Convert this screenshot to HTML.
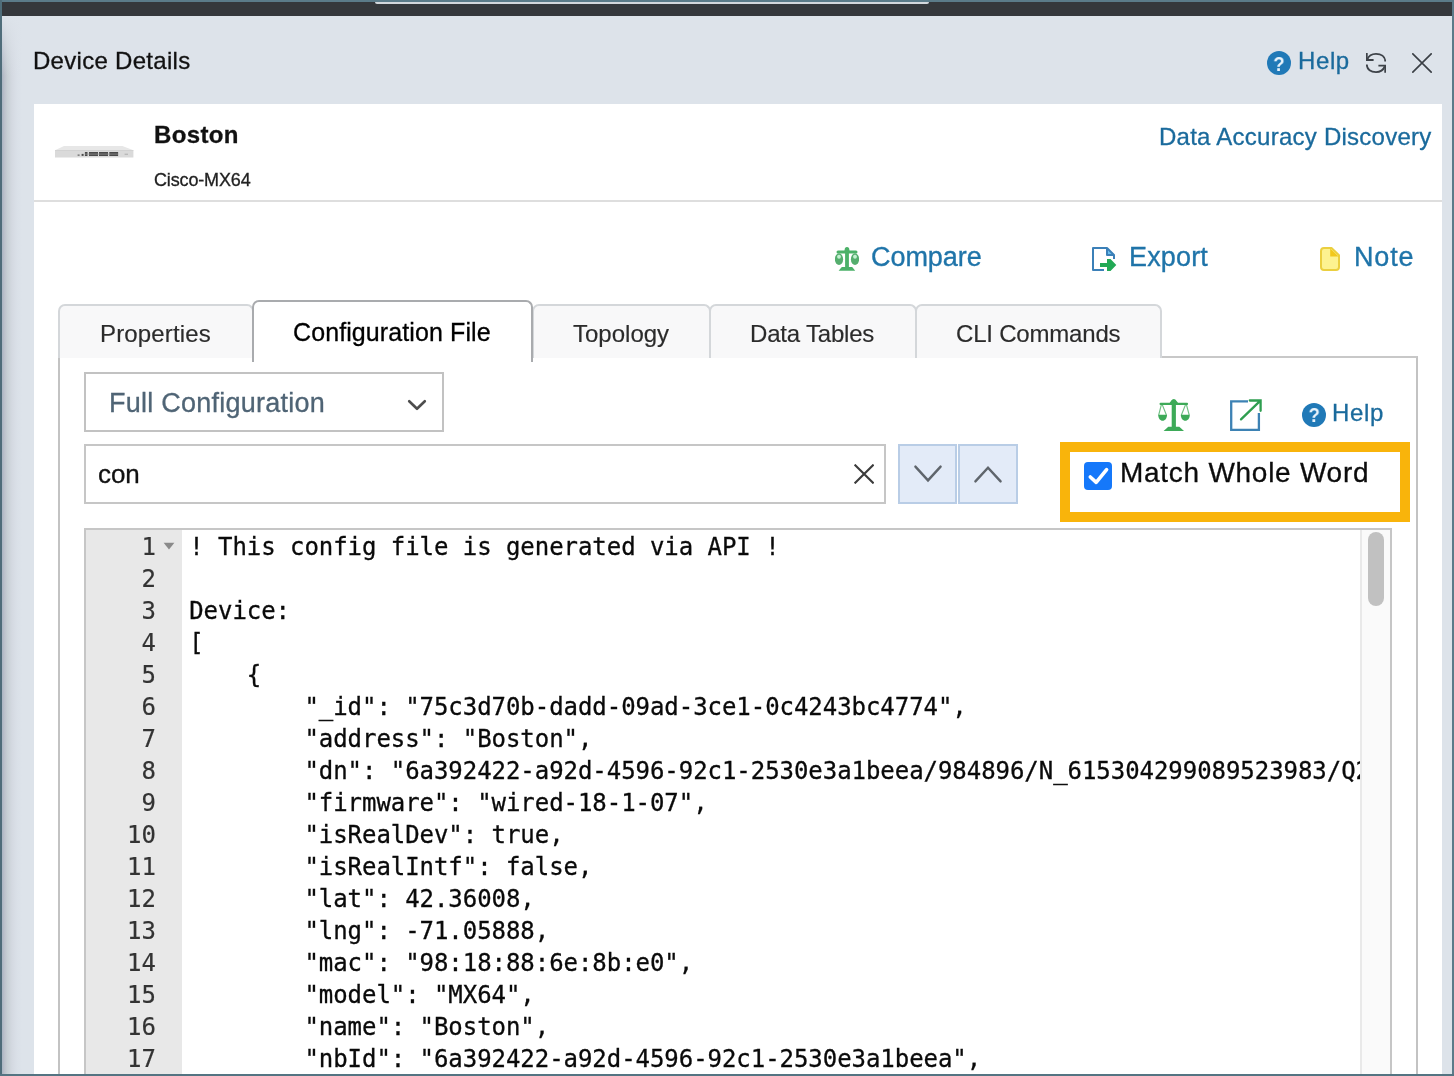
<!DOCTYPE html>
<html lang="en">
<head>
<meta charset="utf-8">
<title>Device Details</title>
<style>
:root{--sans:"Liberation Sans","DejaVu Sans",sans-serif;--mono:"DejaVu Sans Mono","Liberation Mono",monospace;}
*{box-sizing:border-box;margin:0;padding:0}
html,body{width:1454px;height:1076px;overflow:hidden}
body{position:relative;background:#dde3ea;font-family:var(--sans);color:#222}
.abs{position:absolute}
.t{will-change:transform;position:absolute;white-space:nowrap;line-height:1;-webkit-text-stroke:.3px}
.link{color:#1a6a9c;-webkit-text-stroke:.3px #1a6a9c}
.link2{color:#1f74a9;-webkit-text-stroke:.35px #1f74a9}
#topteal{left:0;top:0;width:1454px;height:2px;background:#5b7b89}
#topbar{left:2px;top:2px;width:1450px;height:14px;background:#35383c}
#topline{left:375px;top:2px;width:554px;height:1.7px;background:#d3d7dc;border-radius:0 0 4px 4px}
#leftteal{left:0;top:0;width:2px;height:1076px;background:#4f6d7a}
#leftshadow{left:2px;top:16px;width:20px;height:1060px;background:linear-gradient(90deg,#a9b5c2 0,#bcc1cb 12%,#c8d0d5 28%,#d4d9e1 50%,#dae0e8 75%,#dde3ea 100%)}
#leftfade{left:2px;top:16px;width:20px;height:60px;background:linear-gradient(180deg,#dde3ea 0,rgba(221,227,234,.6) 40%,rgba(221,227,234,0) 100%)}
#rightteal{left:1452px;top:0;width:2px;height:1076px;background:#5b7b89}
#bottomteal{left:0;top:1074px;width:1454px;height:2px;background:#547482}
#panel{left:34px;top:104px;width:1408px;height:970px;background:#fff}
#sep{left:34px;top:200px;width:1408px;height:2px;background:#dedede}

.tab{position:absolute;top:304px;height:54px;background:#f8f8f9;border:2px solid #d4d7da;border-bottom:none;border-radius:7px 7px 0 0}
.tab.act{top:300px;height:62px;background:#fff;border-color:#a9abae}
.tabt{font-size:24px;color:#2b2b2b;top:322.4px;-webkit-text-stroke:.15px}
#tabpanel{left:58px;top:356px;width:1360px;height:730px;border:2px solid #c3c3c3;border-top-color:#c8c8c8}
#tabcover{left:60px;top:356px;width:1101px;height:2px;background:#fff}
.box{position:absolute;background:#fff;border:2px solid #c2c2c2}
.btn{position:absolute;top:444px;height:60px;background:#e3ebf8;border:2px solid #b9cde6}
#orange{left:1060px;top:442px;width:350px;height:80px;border:10px solid #f9b40b;background:#fff}
#cb{left:1084px;top:462px;width:28px;height:28px;border-radius:4px;background:#1578fa}
#editor{left:84px;top:528px;width:1308px;height:560px;border:2px solid #c6c6c6;background:#fff;overflow:hidden}
#gutter{left:0;top:0;width:96px;height:560px;background:#e8e8e8}
.ln{position:absolute;left:0;width:69.9px;text-align:right;color:#333;-webkit-text-stroke:.2px}
#editor .ln,#editor .cl{font-family:var(--mono);font-size:24px;line-height:32px;height:32px;white-space:pre;letter-spacing:-0.05px}
.cl{position:absolute;left:103.2px;color:#0a0a0a;-webkit-text-stroke:.3px}
#code{will-change:transform;left:0;top:0;width:1274px;height:560px;overflow:hidden}
#lnwrap{will-change:transform;left:0;top:0;width:96px;height:560px}
#sbar{left:1274px;top:0;width:30px;height:560px;background:#fafafa;border-left:2px solid #e9e9e9}
#thumb{left:1282px;top:2px;width:15.8px;height:74px;border-radius:8px;background:#c1c1c1}
</style>
</head>
<body>
<div class="abs" id="topteal"></div>
<div class="abs" id="topbar"></div>
<div class="abs" id="topline"></div>
<div class="abs" id="leftshadow"></div>
<div class="abs" id="leftfade"></div>
<div class="abs" id="leftteal"></div>
<div class="abs" id="rightteal"></div>
<div class="abs" id="panel"></div>
<div class="abs" id="sep"></div>
<div class="t" id="title" style="left:32.8px;top:48.5px;font-size:24px;color:#111;letter-spacing:.29px">Device Details</div>
<div class="abs" id="hhelp" style="left:1267px;top:51px;width:24px;height:24px;border-radius:50%;background:#2079b7"></div>
<div class="t" style="left:1267px;top:52.6px;width:24px;text-align:center;font-size:21px;font-weight:bold;color:#e8f3fb;-webkit-text-stroke:0;transform:scaleX(.88)">?</div>
<div class="t link" id="helptxt" style="left:1298px;top:48.5px;font-size:24px;letter-spacing:.6px">Help</div>
<svg class="abs" style="left:1366px;top:53px" width="20" height="20" viewBox="0 0 20 20" fill="none" stroke="#3d4248" stroke-width="1.8">
<path d="M0.8,0 V7 H7.6"/><path d="M1.3,6.4 C2.6,3 5.6,0.9 10,0.9 C15,0.9 19.2,3.2 19.2,8.6"/>
<path d="M12.4,12.6 H19.2 V19.8"/><path d="M18.7,13.4 C17.4,16.9 14.4,19.1 10,19.1 C5,19.1 0.8,16.8 0.8,11.6"/>
</svg>
<svg class="abs" style="left:1412px;top:53px" width="20" height="20" viewBox="0 0 20 20" fill="none" stroke="#3a3f45" stroke-width="1.6">
<path d="M0.3,0.3 L19.7,19.7 M19.7,0.3 L0.3,19.7"/></svg>
<!--HEADER-->
<svg class="abs" style="left:54px;top:145px" width="81" height="14" viewBox="54 145 81 14">
<polygon points="64,146 122.4,146 133.4,150.2 55,150.2" fill="#e7e7e7"/>
<rect x="55" y="150.2" width="78.4" height="7.3" fill="#dadada"/>
<rect x="55" y="150" width="78.4" height="0.8" fill="#cfcfcf"/>
<g fill="#4a4a4a"><rect x="84.9" y="152" width="2.6" height="4"/><rect x="89" y="152" width="9" height="4"/><rect x="99" y="152" width="9" height="4"/><rect x="109.3" y="152" width="8.8" height="4"/>
<rect x="77.6" y="154.6" width="2" height="1"/><rect x="81.6" y="153.9" width="2" height="2"/></g>
<rect x="84.9" y="153.7" width="33.2" height="0.7" fill="#9a9a9a"/>
<rect x="124.6" y="153.6" width="3.4" height="1.4" fill="#b9b9b9"/>
</svg>
<div class="t" id="boston" style="left:154.1px;top:122.8px;font-size:24px;font-weight:bold;color:#111;letter-spacing:.35px">Boston</div>
<div class="t" id="model" style="left:154px;top:170.7px;font-size:18px;color:#222;letter-spacing:-.15px">Cisco-MX64</div>
<div class="t link" id="dad" style="right:22px;top:125px;font-size:24px;letter-spacing:.25px">Data Accuracy Discovery</div>
<!--DEVICE-->
<svg class="abs" id="ic_cmp" style="left:835px;top:247px" width="24" height="24" viewBox="0 0 24 24" fill="#4bb168">
<rect x="10.1" y="1" width="3.8" height="21"/>
<path d="M9.7,2.6 Q9.7,0 12,0 Q14.3,0 14.3,2.6 L14.6,3.6 H21 a1.5,1.5 0 0 1 0,3 H3 a1.5,1.5 0 0 1 0,-3 H9.4 Z"/>
<ellipse cx="4" cy="12.2" rx="4.1" ry="5.9" fill="#55ae6e"/>
<ellipse cx="20" cy="12.2" rx="4.1" ry="5.9" fill="#55ae6e"/>
<ellipse cx="4" cy="9.8" rx="1.9" ry="2" fill="#c4f2d2"/>
<ellipse cx="20" cy="9.8" rx="1.9" ry="2" fill="#c4f2d2"/>
<path d="M6.8,19.9 H17.2 L20.2,23.8 H3.6 Z"/>
</svg>
<div class="t link2" id="cmp" style="left:870.5px;top:243.9px;font-size:27px;letter-spacing:-.05px">Compare</div>
<svg class="abs" id="ic_exp" style="left:1092px;top:247px" width="25" height="24" viewBox="0 0 25 24">
<path d="M15,1 V8 H22 Z" fill="#6cc0f0"/>
<path d="M12,23 H1 V1 H15 L22,8 V12" fill="none" stroke="#3b80b8" stroke-width="2" stroke-linejoin="round"/>
<path d="M15,1 V8 H22" fill="none" stroke="#3b80b8" stroke-width="2" stroke-linejoin="round"/>
<polygon points="8,16 15,16 15,12 18.5,12 24.3,18 18.5,24 15,24 15,20 8,20" fill="#22a955"/>
</svg>
<div class="t link2" id="exp" style="left:1128.5px;top:243.9px;font-size:27px;letter-spacing:.15px">Export</div>
<svg class="abs" id="ic_note" style="left:1320px;top:247px" width="20" height="24" viewBox="0 0 20 24">
<path d="M4,1 H11.5 L19,8.2 V20 a3,3 0 0 1 -3,3 H4 a3,3 0 0 1 -3,-3 V4 a3,3 0 0 1 3,-3 Z" fill="#fdf290" stroke="#ebcf3f" stroke-width="2" stroke-linejoin="round"/>
<path d="M10.2,1.6 L18.6,9.6 H10.2 Z" fill="#f2c81b"/>
</svg>
<div class="t link2" id="note" style="left:1353.5px;top:243.9px;font-size:27px;letter-spacing:.85px">Note</div>
<!--TOOLBAR-->
<div class="abs" id="tabpanel"></div>
<div class="abs" id="tabcover"></div>
<div class="tab" style="left:58px;width:196px"></div>
<div class="tab" style="left:532px;width:179px"></div>
<div class="tab" style="left:709px;width:208px"></div>
<div class="tab" style="left:915px;width:247px"></div>
<div class="tab act" style="left:252px;width:281px"></div>
<div class="t tabt" id="t1" style="left:100px;letter-spacing:.15px">Properties</div>
<div class="t tabt" id="t2" style="left:293px;font-size:25px;top:319.8px;color:#000;letter-spacing:.1px;-webkit-text-stroke:.3px">Configuration File</div>
<div class="t tabt" id="t3" style="left:573px">Topology</div>
<div class="t tabt" id="t4" style="left:750.4px;letter-spacing:-.2px">Data Tables</div>
<div class="t tabt" id="t5" style="left:956px;letter-spacing:-.2px">CLI Commands</div>
<!--TABS-->
<div class="box" style="left:84px;top:372px;width:360px;height:60px"></div>
<div class="t" id="fullcfg" style="left:109px;top:389.5px;font-size:27px;color:#4f6475;letter-spacing:.25px">Full Configuration</div>
<svg class="abs" style="left:406px;top:398px" width="22" height="14" viewBox="0 0 22 14" fill="none" stroke="#4d4d4d" stroke-width="2.6" stroke-linecap="round" stroke-linejoin="round"><path d="M3.2,3.2 L11,10.8 L18.8,3.2"/></svg>
<svg class="abs" id="ic_sc2" style="left:1158px;top:399px" width="32" height="32" viewBox="0 0 32 32" fill="#3daa58">
<rect x="13.7" y="1" width="4.2" height="28"/>
<path d="M14.3,0.6 Q15.8,-0.4 17.3,0.6 L20,3.8 H29 a1.1,1.1 0 0 1 0,2.2 H2.6 a1.1,1.1 0 0 1 0,-2.2 H11.6 Z"/>
<path d="M10.3,27.8 H21.3 L26,32 H5.6 Z"/>
<path d="M0.2,15.8 H9 C9,19.5 7,21.8 4.6,21.8 C2.2,21.8 0.2,19.5 0.2,15.8 Z"/>
<path d="M22.8,15.8 H31.8 C31.8,19.5 29.7,21.8 27.3,21.8 C24.9,21.8 22.8,19.5 22.8,15.8 Z"/>
<path d="M3.4,5.5 L0.7,16 M4.2,5.5 L8.4,16 M28.4,5.5 L31.2,16 M27.6,5.5 L23.4,16" fill="none" stroke="#3daa58" stroke-width="1.1" opacity=".75"/>
</svg>
<svg class="abs" id="ic_pop" style="left:1229px;top:398px" width="34" height="34" viewBox="1229 398 34 34" fill="none" stroke-width="2.3">
<path d="M1248,401.4 H1231.2 V429.8 H1258.9 V413" stroke="#3d82b4" stroke-linejoin="miter"/>
<path d="M1241,419.4 L1260.4,400.6 M1249.8,400.5 H1260.6 V410.8" stroke="#2f9e50" stroke-linecap="round" stroke-linejoin="miter"/>
</svg>
<div class="abs" style="left:1302px;top:402.6px;width:24.4px;height:24.4px;border-radius:50%;background:#2079b7"></div>
<div class="t" style="left:1302px;top:404.2px;width:24.4px;text-align:center;font-size:21px;font-weight:bold;color:#e8f3fb;-webkit-text-stroke:0;transform:scaleX(.88)">?</div>
<div class="t link" id="help2" style="left:1332.2px;top:401px;font-size:24px;letter-spacing:.7px">Help</div>
<div class="box" style="left:84px;top:444px;width:802px;height:60px;border-color:#c6c6c6"></div>
<div class="t" id="con" style="left:97.8px;top:460.9px;font-size:26px;color:#111;letter-spacing:-.1px">con</div>
<svg class="abs" style="left:854px;top:464px" width="20" height="20" viewBox="0 0 20 20" fill="none" stroke="#3c3c3c" stroke-width="2.1"><path d="M0.6,0.6 L19.6,19.4 M19.6,0.6 L0.6,19.4"/></svg>
<div class="btn" style="left:898px;width:59.4px"></div>
<div class="btn" style="left:958.4px;width:59.6px"></div>
<svg class="abs" style="left:912px;top:463px" width="32" height="22" viewBox="0 0 32 22" fill="none" stroke="#5f656c" stroke-width="2.4" stroke-linecap="round" stroke-linejoin="miter"><path d="M3.4,3.6 L16,17.4 L28.6,3.6"/></svg>
<svg class="abs" style="left:972px;top:463px" width="32" height="22" viewBox="0 0 32 22" fill="none" stroke="#5f656c" stroke-width="2.4" stroke-linecap="round" stroke-linejoin="miter"><path d="M3.4,18.4 L16,4.8 L28.6,18.4"/></svg>
<div class="abs" id="orange"></div>
<div class="abs" id="cb"></div>
<svg class="abs" style="left:1084px;top:462px" width="28" height="28" viewBox="0 0 28 28" fill="none" stroke="#fff" stroke-width="3.6" stroke-linecap="round" stroke-linejoin="round"><path d="M6.3,15 L12.2,20.4 L22.6,7.6"/></svg>
<div class="t" id="mww" style="left:1119.5px;top:459px;font-size:28px;color:#0c0c0c;letter-spacing:.73px">Match Whole Word</div>
<!--CONTROLS-->
<div class="abs" id="editor"><div class="abs" id="code">
<div class="cl" style="top:0.5px">! This config file is generated via API !</div>
<div class="cl" style="top:32.5px"></div>
<div class="cl" style="top:64.5px">Device:</div>
<div class="cl" style="top:96.5px">[</div>
<div class="cl" style="top:128.5px">    {</div>
<div class="cl" style="top:160.5px">        "_id": "75c3d70b-dadd-09ad-3ce1-0c4243bc4774",</div>
<div class="cl" style="top:192.5px">        "address": "Boston",</div>
<div class="cl" style="top:224.5px">        "dn": "6a392422-a92d-4596-92c1-2530e3a1beea/984896/N_615304299089523983/Q2XX-XXXX-XXXX",</div>
<div class="cl" style="top:256.5px">        "firmware": "wired-18-1-07",</div>
<div class="cl" style="top:288.5px">        "isRealDev": true,</div>
<div class="cl" style="top:320.5px">        "isRealIntf": false,</div>
<div class="cl" style="top:352.5px">        "lat": 42.36008,</div>
<div class="cl" style="top:384.5px">        "lng": -71.05888,</div>
<div class="cl" style="top:416.5px">        "mac": "98:18:88:6e:8b:e0",</div>
<div class="cl" style="top:448.5px">        "model": "MX64",</div>
<div class="cl" style="top:480.5px">        "name": "Boston",</div>
<div class="cl" style="top:512.5px">        "nbId": "6a392422-a92d-4596-92c1-2530e3a1beea",</div>
<div class="cl" style="top:544.5px">        "networkId": "N_615304299089523983",</div>
</div><div class="abs" id="gutter"><div class="abs" id="lnwrap">
<div class="ln" style="top:0.5px">1</div>
<div class="ln" style="top:32.5px">2</div>
<div class="ln" style="top:64.5px">3</div>
<div class="ln" style="top:96.5px">4</div>
<div class="ln" style="top:128.5px">5</div>
<div class="ln" style="top:160.5px">6</div>
<div class="ln" style="top:192.5px">7</div>
<div class="ln" style="top:224.5px">8</div>
<div class="ln" style="top:256.5px">9</div>
<div class="ln" style="top:288.5px">10</div>
<div class="ln" style="top:320.5px">11</div>
<div class="ln" style="top:352.5px">12</div>
<div class="ln" style="top:384.5px">13</div>
<div class="ln" style="top:416.5px">14</div>
<div class="ln" style="top:448.5px">15</div>
<div class="ln" style="top:480.5px">16</div>
<div class="ln" style="top:512.5px">17</div>
<div class="ln" style="top:544.5px">18</div>
</div><svg class="abs" style="left:76.8px;top:11.6px" width="12" height="8" viewBox="0 0 12 8"><path d="M0.6,0.8 H11.4 L6,7.4 Z" fill="#8a8a8a"/></svg>
</div><div class="abs" id="sbar"></div><div class="abs" id="thumb"></div></div>
<!--EDITOR-->
<div class="abs" id="bottomteal"></div>
</body>
</html>
